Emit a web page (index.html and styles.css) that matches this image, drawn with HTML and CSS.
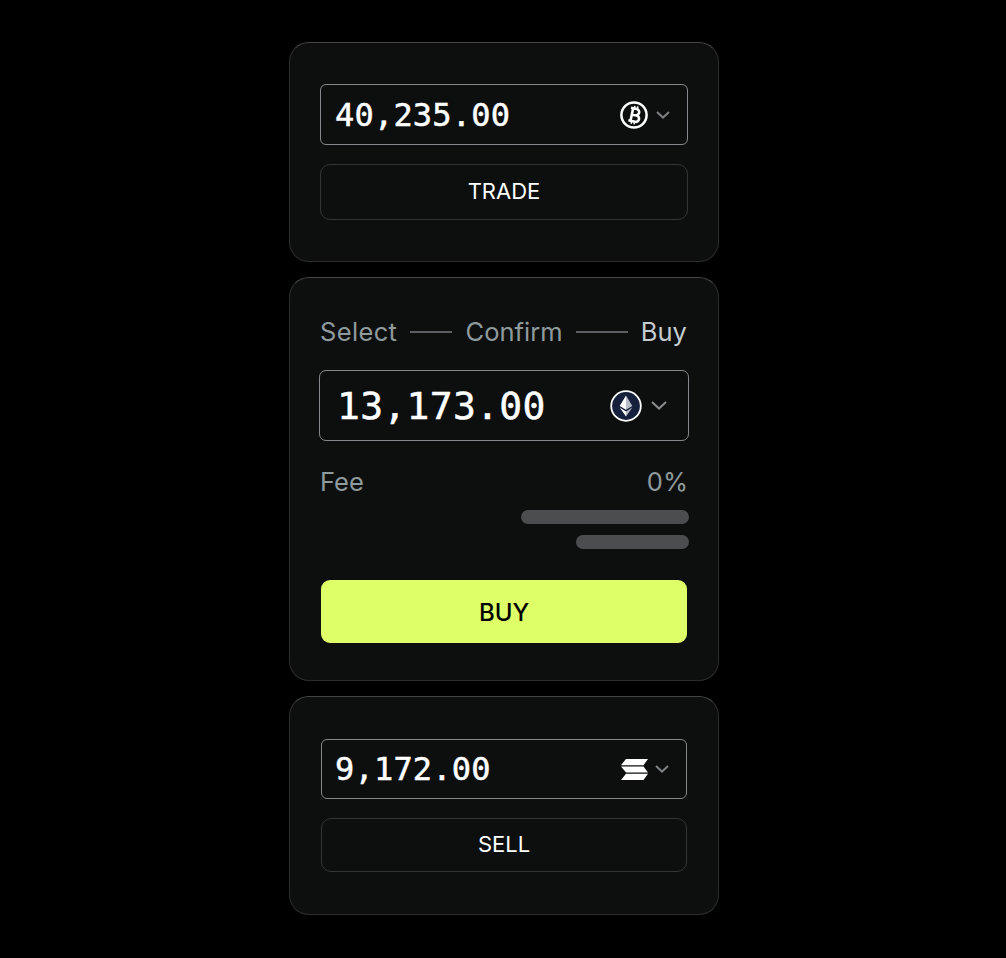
FILE: index.html
```html
<!DOCTYPE html>
<html lang="en">
<head>
    <meta charset="UTF-8">
    <meta name="viewport" content="width=device-width, initial-scale=1.0">
    <title>Trade</title>
    <link rel="stylesheet" href="styles.css">
</head>
<body>
    <main class="stack">
        <section class="card card-trade">
            <div class="field">
                <span class="amount">40,235.00</span>
                <div class="coin">
                    <svg class="coin-icon" viewBox="0 0 28 28" width="28" height="28">
                        <circle cx="14" cy="14" r="12.6" fill="none" stroke="#fff" stroke-width="2.5"/>
                        <g transform="rotate(12 14 14)" fill="none" stroke="#fff" stroke-width="2.6">
                            <path d="M9.6 7.6h5.8a3.1 3.1 0 0 1 0 6.3H10.5M10.5 13.9h6a3.2 3.2 0 0 1 0 6.5H9.6M11.8 7.6v12.8"/>
                            <path d="M13 4.8v2.8M16 4.8v2.8M13 20.4v2.8M16 20.4v2.8" stroke-width="1.6"/>
                        </g>
                    </svg>
                    <svg class="chevron" viewBox="0 0 14 8" width="14" height="8">
                        <path d="M1 1l6 5.6L13 1" fill="none" stroke="#7d8080" stroke-width="2"/>
                    </svg>
                </div>
            </div>
            <button class="btn-ghost" type="button">TRADE</button>
        </section>

        <section class="card card-buy">
            <div class="steps">
                <span class="step-first">Select</span>
                <i class="step-line step-line-short"></i>
                <span>Confirm</span>
                <i class="step-line"></i>
                <span class="step-active">Buy</span>
            </div>
            <div class="field">
                <span class="amount">13,173.00</span>
                <div class="coin">
                    <svg class="coin-icon" viewBox="0 0 32 32" width="32" height="32">
                        <circle cx="16" cy="16" r="14.8" fill="#16203c" stroke="#fff" stroke-width="1.8"/>
                        <path d="M16 5.5l-6.3 10.6 6.3 3.7z" fill="#fff"/>
                        <path d="M16 5.5l6.3 10.6-6.3 3.7z" fill="#b9bdc8"/>
                        <path d="M9.7 17.6l6.3 9v-5.2z" fill="#fff"/>
                        <path d="M22.3 17.6l-6.3 9v-5.2z" fill="#b9bdc8"/>
                    </svg>
                    <svg class="chevron" viewBox="0 0 16 9" width="16" height="9">
                        <path d="M1 1l7 6.6L15 1" fill="none" stroke="#8a8d8d" stroke-width="2"/>
                    </svg>
                </div>
            </div>
            <div class="fee">
                <span>Fee</span>
                <span>0%</span>
            </div>
            <div class="bars">
                <div class="bar bar-long"></div>
                <div class="bar bar-short"></div>
            </div>
            <button class="btn-buy" type="button">BUY</button>
        </section>

        <section class="card card-sell">
            <div class="field">
                <span class="amount">9,172.00</span>
                <div class="coin coin-sol">
                    <svg class="coin-icon" viewBox="0 0 27 21" width="27" height="21">
                        <path d="M5 0h22l-4.5 6.2H0z" fill="#fff"/>
                        <path d="M0 7.4h22.5l4.5 6.2H5z" fill="#fff"/>
                        <path d="M5 14.8h22L22.5 21H0z" fill="#fff"/>
                    </svg>
                    <svg class="chevron" viewBox="0 0 14 8" width="14" height="8">
                        <path d="M1 1l6 5.6L13 1" fill="none" stroke="#7d8080" stroke-width="2"/>
                    </svg>
                </div>
            </div>
            <button class="btn-ghost" type="button">SELL</button>
        </section>
    </main>
</body>
</html>
```

FILE: styles.css
```css
* {
    box-sizing: border-box;
}

body {
    margin: 0;
    background-color: #000;
    font-family: Inter, "Liberation Sans", sans-serif;
    color: #fff;
}

.stack {
    width: 430px;
    margin-left: 289px;
    padding-top: 42px;
    display: flex;
    flex-direction: column;
    gap: 15px;
}

.card {
    display: flex;
    flex-direction: column;
    background-color: #0d0f0f;
    border: 1px solid #2c2e2e;
    border-top-color: #444646;
    border-radius: 20px;
}

.card-trade {
    height: 220px;
    padding: 41px 30px 0;
    gap: 19px;
}

.card-buy {
    height: 404px;
    padding: 39px 29px 0;
}

.card-sell {
    height: 219px;
    padding: 42px 31px 0;
    gap: 19px;
}

.field {
    display: flex;
    align-items: center;
    justify-content: space-between;
    height: 61px;
    padding: 0 17px 0 14px;
    border: 1px solid #85888a;
    border-radius: 6px;
}

.card-buy .field {
    height: 71px;
    margin-top: 24px;
    padding: 0 21px 0 17px;
    border-radius: 7px;
}

.card-sell .field {
    height: 60px;
    padding: 0 17px 0 13px;
}

.amount {
    font-family: "DejaVu Sans Mono", "Liberation Mono", monospace;
    font-size: 32px;
    letter-spacing: 0.2px;
    -webkit-text-stroke: 0.5px #fff;
}

.card-buy .amount {
    font-size: 38px;
    letter-spacing: 0.3px;
}

.coin {
    display: flex;
    align-items: center;
    gap: 8px;
}

.card-buy .coin {
    gap: 9px;
}

.coin-sol {
    gap: 7px;
}

.coin-icon,
.chevron {
    display: block;
}

.btn-ghost {
    height: 56px;
    padding: 0 0 2px;
    background: none;
    border: 1px solid #333535;
    border-radius: 10px;
    color: #fff;
    font-family: inherit;
    font-size: 22px;
}

.card-sell .btn-ghost {
    height: 54px;
}

.steps {
    display: flex;
    align-items: center;
    justify-content: space-between;
    padding: 0 2px 0 1px;
    font-size: 25.5px;
    line-height: 29px;
    color: #8f9a9c;
}

.step-first {
    letter-spacing: 0.35px;
}

.step-line {
    width: 52px;
    height: 2px;
    background-color: #5c6062;
}

.step-line-short {
    width: 42px;
}

.step-active {
    color: #c4cccf;
}

.fee {
    display: flex;
    justify-content: space-between;
    margin-top: 26px;
    padding: 0 1px;
    font-size: 25.5px;
    line-height: 29px;
    color: #8f9a9c;
}

.bars {
    display: flex;
    flex-direction: column;
    align-items: flex-end;
    gap: 11px;
    margin-top: 14px;
}

.bar {
    height: 14px;
    border-radius: 7px;
    background-color: #4b4d4e;
}

.bar-long {
    width: 168px;
}

.bar-short {
    width: 113px;
}

.btn-buy {
    height: 63px;
    margin: 31px 2px 0;
    padding: 2px 0 0;
    background-color: #deff68;
    border: none;
    border-radius: 9px;
    color: #000;
    font-family: inherit;
    font-size: 24px;
    font-weight: 500;
}
```
